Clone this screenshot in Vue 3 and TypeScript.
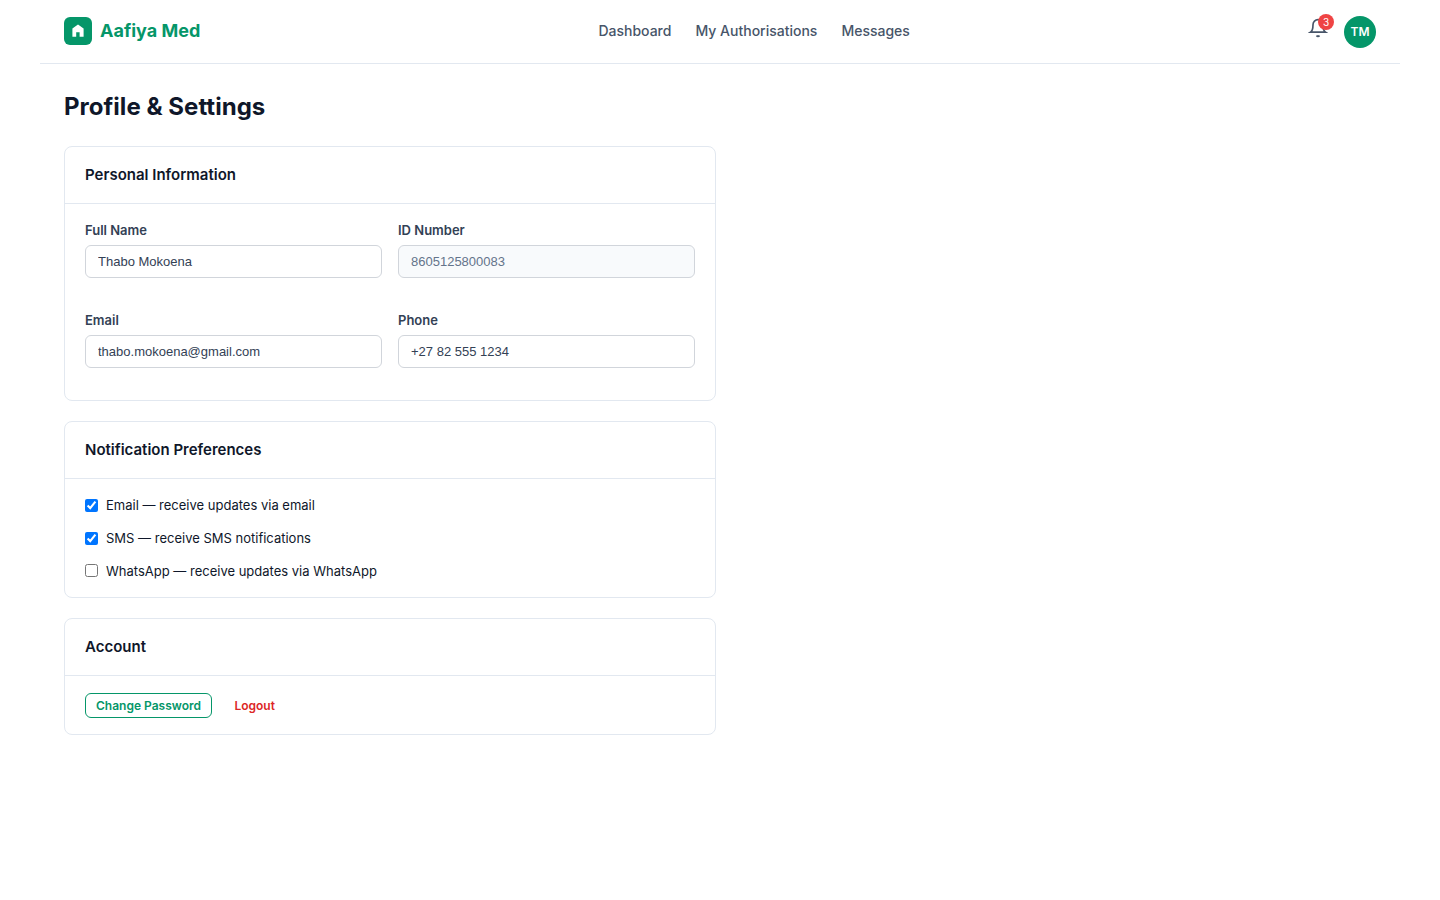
<script setup lang="ts">
import { ref } from 'vue'

interface Field {
  id: string
  label: string
  value: string
  disabled?: boolean
}

interface Preference {
  label: string
  enabled: boolean
}

const links: string[] = ['Dashboard', 'My Authorisations', 'Messages']

const fields = ref<Field[]>([
  { id: 'name', label: 'Full Name', value: 'Thabo Mokoena' },
  { id: 'id-number', label: 'ID Number', value: '8605125800083', disabled: true },
  { id: 'email', label: 'Email', value: 'thabo.mokoena@gmail.com' },
  { id: 'phone', label: 'Phone', value: '+27 82 555 1234' },
])

const preferences = ref<Preference[]>([
  { label: 'Email — receive updates via email', enabled: true },
  { label: 'SMS — receive SMS notifications', enabled: true },
  { label: 'WhatsApp — receive updates via WhatsApp', enabled: false },
])
</script>

<template>
  <div class="page">
    <header class="topbar">
      <div class="brand">
        <span class="logo">
          <svg width="16" height="16" viewBox="0 0 16 16" fill="#fff">
            <path d="M8 1.4 2.4 5.4V13.8h3.8V9.2h3.4v4.6h4V5.4z" />
          </svg>
        </span>
        <span>Aafiya Med</span>
      </div>
      <nav class="nav">
        <a v-for="link in links" :key="link">{{ link }}</a>
      </nav>
      <div class="actions">
        <div class="bell">
          <svg width="20" height="20" viewBox="0 0 24 24" fill="none" stroke="#475569" stroke-width="2">
            <path d="M18 8A6 6 0 0 0 6 8c0 7-3 9-3 9h18s-3-2-3-9" />
            <path d="M13.73 21a2 2 0 0 1-3.46 0" />
          </svg>
          <span class="badge">3</span>
        </div>
        <div class="avatar">TM</div>
      </div>
    </header>

    <main class="content">
      <h1>Profile &amp; Settings</h1>

      <section class="card">
        <h2>Personal Information</h2>
        <div class="body grid">
          <div v-for="f in fields" :key="f.id" class="field">
            <label :for="f.id">{{ f.label }}</label>
            <input :id="f.id" v-model="f.value" type="text" :disabled="f.disabled" />
          </div>
        </div>
      </section>

      <section class="card">
        <h2>Notification Preferences</h2>
        <div class="body prefs">
          <label v-for="p in preferences" :key="p.label" class="pref">
            <input v-model="p.enabled" type="checkbox" />
            <span>{{ p.label }}</span>
          </label>
        </div>
      </section>

      <section class="card">
        <h2>Account</h2>
        <div class="body buttons">
          <button class="btn outline">Change Password</button>
          <button class="btn danger">Logout</button>
        </div>
      </section>
    </main>
  </div>
</template>

<style>
body {
  background: #fff;
}
</style>

<style scoped>
.page,
.page * {
  box-sizing: border-box;
}
.page {
  max-width: 1360px;
  margin: 0 auto;
  font-family: Inter, sans-serif;
  font-size: 14px;
  line-height: 1.6;
  color: #0f172a;
}
.topbar {
  height: 64px;
  padding: 0 24px;
  display: flex;
  align-items: center;
  justify-content: space-between;
  border-bottom: 1px solid #e2e8f0;
}
.brand {
  display: flex;
  align-items: center;
  gap: 8px;
  padding-bottom: 1px;
  font-size: 18px;
  font-weight: 700;
  color: #059669;
}
.logo {
  width: 28px;
  height: 28px;
  border-radius: 6px;
  background: #059669;
  display: flex;
  align-items: center;
  justify-content: center;
}
.nav {
  display: flex;
  gap: 24px;
  padding-bottom: 1px;
  font-weight: 500;
  color: #475569;
}
.actions {
  display: flex;
  align-items: center;
  gap: 16px;
}
.bell {
  position: relative;
  height: 27px;
}
.bell svg {
  display: block;
}
.badge {
  position: absolute;
  top: -4px;
  right: -6px;
  width: 16px;
  height: 16px;
  border-radius: 50%;
  background: #ef4444;
  color: #fff;
  font-size: 10px;
  display: flex;
  align-items: center;
  justify-content: center;
}
.avatar {
  width: 32px;
  height: 32px;
  border-radius: 50%;
  background: #059669;
  color: #fff;
  font-size: 12px;
  font-weight: 600;
  display: flex;
  align-items: center;
  justify-content: center;
}
.content {
  padding: 24px;
}
h1 {
  margin: 0 0 21px;
  font-size: 24px;
  font-weight: 700;
  line-height: 37px;
  letter-spacing: 0.03px;
}
.card {
  width: 652px;
  margin-bottom: 20px;
  border: 1px solid #e2e8f0;
  border-radius: 8px;
}
h2 {
  margin: 0;
  padding: 16px 20px;
  height: 57px;
  font-size: 15px;
  font-weight: 600;
  line-height: 24px;
  border-bottom: 1px solid #e2e8f0;
}
.body {
  padding: 16px 20px;
}
.grid {
  display: grid;
  grid-template-columns: 1fr 1fr;
  gap: 16px;
}
.field {
  height: 74px;
}
.field label {
  display: block;
  margin-bottom: 4px;
  font-size: 13px;
  font-weight: 600;
  line-height: 21px;
  color: #334155;
}
.field input {
  display: block;
  width: 100%;
  height: 33px;
  padding: 8px 12px;
  border: 1px solid #d1d5db;
  border-radius: 6px;
  background: #fff;
  color: #334155;
  font-family: "Liberation Sans", Arial, sans-serif;
  font-size: 13px;
}
.field input:disabled {
  background: #f8fafc;
  color: #64748b;
}
.prefs {
  display: flex;
  flex-direction: column;
  gap: 12px;
}
.pref {
  display: flex;
  align-items: center;
  gap: 8px;
  font-size: 13px;
  line-height: 20.8px;
}
.pref input {
  margin: 0;
  width: 13px;
  height: 13px;
}
.buttons {
  display: flex;
  gap: 11.5px;
  padding-top: 17px;
}
.btn {
  height: 25px;
  padding: 0 10px;
  border: 1px solid transparent;
  border-radius: 6px;
  background: transparent;
  font-family: Inter, sans-serif;
  font-size: 12px;
  font-weight: 600;
}
.outline {
  border-color: #059669;
  color: #059669;
}
.danger {
  color: #dc2626;
}
</style>
